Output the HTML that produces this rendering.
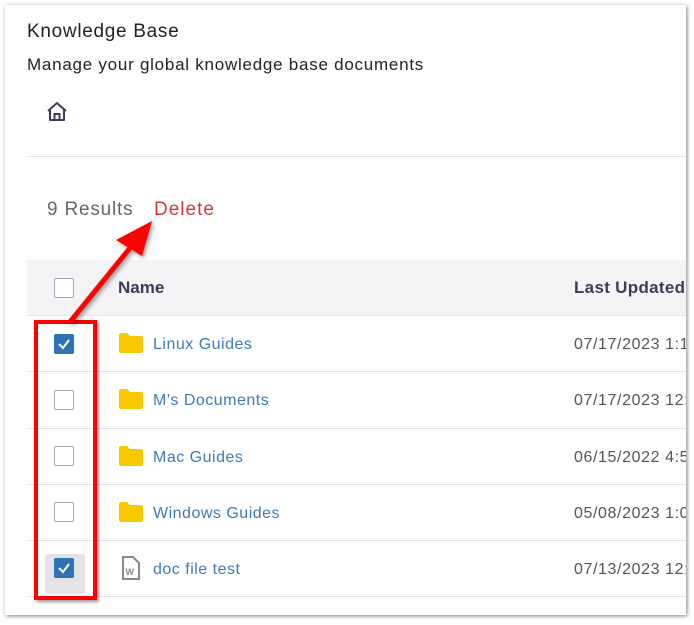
<!DOCTYPE html>
<html><head><style>
body{margin:0;width:694px;height:625px;background:#fff;position:relative;overflow:hidden;font-family:"Liberation Sans",sans-serif}
.card{position:absolute;left:5px;top:5px;width:681px;height:610px;background:#fff;box-shadow:1px 1px 4px rgba(0,0,0,.5);overflow:hidden}
.abs{position:absolute;white-space:nowrap}
.cb{position:absolute;left:49px;width:18px;height:18px;border:1px solid #a9a6b8;border-radius:2px;background:#fff}
.cb.on{background:#2f72b5;border-color:#2f72b5}
.line{position:absolute;left:22px;right:0;height:1px;background:#e4e4e8}
.name{position:absolute;left:148px;color:#3b7bbb;font-size:16px;letter-spacing:.5px;white-space:nowrap}
.date{position:absolute;left:569px;color:#555;font-size:16px;letter-spacing:.6px;white-space:nowrap}
.fold{position:absolute;left:113px;width:25px;height:20px}
</style></head><body>
<div class="card">
<div class="abs" style="left:22px;top:16px;font-size:19px;letter-spacing:.7px;color:#222">Knowledge Base</div>
<div class="abs" style="left:22px;top:50px;font-size:17px;letter-spacing:.75px;color:#222">Manage your global knowledge base documents</div>
<svg class="abs" style="left:40px;top:96px" width="24" height="22" viewBox="0 0 24 22"><path d="M3 10 L12 2 L21 10 M5 8.5 V19 H19 V8.5 M9.5 19 V13 H14.5 V19" fill="none" stroke="#3f3a5c" stroke-width="2" stroke-linejoin="round"/></svg>
<div class="line" style="top:151px"></div>
<div class="abs" style="left:42px;top:194px;font-size:19px;letter-spacing:.8px;color:#666">9 Results</div>
<div class="abs" style="left:149px;top:194px;font-size:19px;letter-spacing:1px;color:#d9363e">Delete</div>
<div class="abs" style="left:22px;top:255px;width:660px;height:55px;background:#f4f4f6"></div>
<div class="cb" style="top:273px"></div>
<div class="abs" style="left:113px;top:273px;font-size:17px;font-weight:bold;color:#3f3a5c">Name</div>
<div class="abs" style="left:569px;top:273px;font-size:17px;font-weight:bold;letter-spacing:.3px;color:#3f3a5c">Last Updated</div>
<div class="line" style="top:310px"></div>
<div class="line" style="top:366px"></div>
<div class="line" style="top:423px"></div>
<div class="line" style="top:479px"></div>
<div class="line" style="top:535px"></div>
<div class="line" style="top:591px"></div>

<div class="cb on" style="top:329px"><svg width="18" height="18"><path d="M4 9 L8 13 L14 5" fill="none" stroke="#fff" stroke-width="2"/></svg></div>
<div class="cb" style="top:385px"></div>
<div class="cb" style="top:441px"></div>
<div class="cb" style="top:497px"></div>
<div class="abs" style="left:40px;top:549px;width:40px;height:40px;background:#e4e4e6;border-radius:3px"></div>
<div class="cb on" style="top:553px"><svg width="18" height="18"><path d="M4 9 L8 13 L14 5" fill="none" stroke="#fff" stroke-width="2"/></svg></div>

<svg class="fold" style="top:328px" viewBox="0 0 25 20"><path d="M1 2 Q1 0 3 0 H9 L12 3 H23 Q25 3 25 5 V18 Q25 20 23 20 H3 Q1 20 1 18Z" fill="#f9c800"/></svg>
<svg class="fold" style="top:384px" viewBox="0 0 25 20"><path d="M1 2 Q1 0 3 0 H9 L12 3 H23 Q25 3 25 5 V18 Q25 20 23 20 H3 Q1 20 1 18Z" fill="#f9c800"/></svg>
<svg class="fold" style="top:441px" viewBox="0 0 25 20"><path d="M1 2 Q1 0 3 0 H9 L12 3 H23 Q25 3 25 5 V18 Q25 20 23 20 H3 Q1 20 1 18Z" fill="#f9c800"/></svg>
<svg class="fold" style="top:497px" viewBox="0 0 25 20"><path d="M1 2 Q1 0 3 0 H9 L12 3 H23 Q25 3 25 5 V18 Q25 20 23 20 H3 Q1 20 1 18Z" fill="#f9c800"/></svg>
<svg class="abs" style="left:116px;top:551px" width="20" height="24" viewBox="0 0 20 24"><path d="M2 1 H12 L18 7 V23 H2Z" fill="#fff" stroke="#888" stroke-width="2"/><text x="4.5" y="19" font-size="9" font-weight="bold" fill="#888" font-family="Liberation Sans">W</text></svg>

<div class="name" style="top:331px">Linux Guides</div>
<div class="name" style="top:387px">M's Documents</div>
<div class="name" style="top:444px">Mac Guides</div>
<div class="name" style="top:500px">Windows Guides</div>
<div class="name" style="top:556px">doc file test</div>
<div class="date" style="top:331px">07/17/2023 1:11 PM</div>
<div class="date" style="top:387px">07/17/2023 12:00 PM</div>
<div class="date" style="top:444px">06/15/2022 4:50 PM</div>
<div class="date" style="top:500px">05/08/2023 1:00 PM</div>
<div class="date" style="top:556px">07/13/2023 12:00 PM</div>
</div>
<div class="abs" style="left:34px;top:320px;width:55px;height:272px;border:4px solid #f00;box-shadow:2px 2px 3px rgba(0,0,0,.4)"></div>
<svg class="abs" style="left:0;top:0;filter:drop-shadow(2px 2px 2px rgba(0,0,0,.4))" width="694" height="625"><line x1="70" y1="322" x2="134" y2="243" stroke="#f00" stroke-width="5"/><path d="M152 221 L116 240 L142 256Z" fill="#f00"/></svg>
</body></html>
